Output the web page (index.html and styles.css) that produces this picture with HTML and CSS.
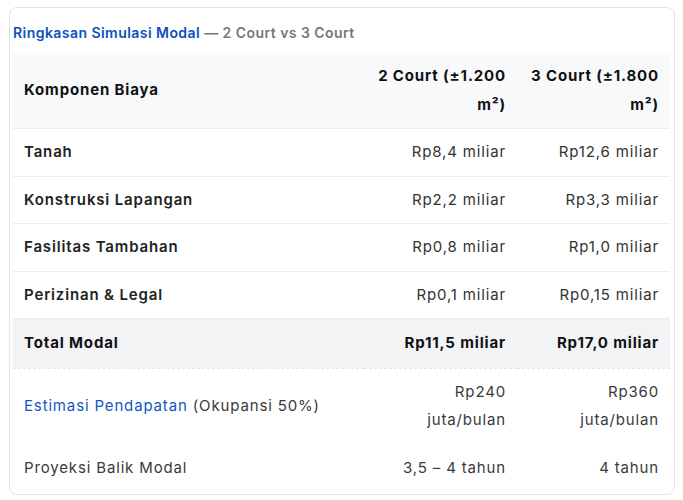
FILE: index.html
```html
<!DOCTYPE html>
<html lang="id">
<head>
<meta charset="utf-8">
<link rel="stylesheet" href="styles.css">
</head>
<body>
<div class="card">
  <table class="sim">
    <caption><span class="cap-main">Ringkasan Simulasi Modal</span> <span class="cap-sub">— 2 Court vs 3 Court</span></caption>
    <colgroup>
      <col class="c1"><col class="c2"><col class="c3">
    </colgroup>
    <thead>
      <tr>
        <th class="left">Komponen Biaya</th>
        <th>2 Court (±1.200 m²)</th>
        <th>3 Court (±1.800 m²)</th>
      </tr>
    </thead>
    <tbody>
      <tr><td class="label">Tanah</td><td>Rp8,4 miliar</td><td>Rp12,6 miliar</td></tr>
      <tr><td class="label">Konstruksi Lapangan</td><td>Rp2,2 miliar</td><td>Rp3,3 miliar</td></tr>
      <tr><td class="label">Fasilitas Tambahan</td><td>Rp0,8 miliar</td><td>Rp1,0 miliar</td></tr>
      <tr><td class="label">Perizinan &amp; Legal</td><td>Rp0,1 miliar</td><td>Rp0,15 miliar</td></tr>
      <tr class="total"><td class="label">Total Modal</td><td>Rp11,5 miliar</td><td>Rp17,0 miliar</td></tr>
      <tr class="plain"><td class="left"><span class="link">Estimasi Pendapatan</span> (Okupansi 50%)</td><td>Rp240 juta/bulan</td><td>Rp360 juta/bulan</td></tr>
      <tr class="plain"><td class="left">Proyeksi Balik Modal</td><td>3,5 – 4 tahun</td><td>4 tahun</td></tr>
    </tbody>
  </table>
</div>
</body>
</html>
```

FILE: styles.css
```css
* { box-sizing: border-box; }
html, body { margin: 0; padding: 0; background: #ffffff; }
body {
  font-family: Inter, "Open Sans", "Liberation Sans", sans-serif;
  color: #333333;
  padding: 7px 9px 0 9px;
}
.card {
  border: 1px solid #e3e4e6;
  border-radius: 8px;
  padding: 0 3px 2px 3px;
  width: 666px;
}
.sim {
  width: 657px;
  border-collapse: collapse;
  table-layout: fixed;
  font-size: 15px;
  line-height: 28.5px;
  letter-spacing: 0.85px;
}
.sim caption {
  text-align: left;
  font-size: 14px;
  line-height: 22px;
  font-weight: 600;
  letter-spacing: 0.45px;
  padding: 14px 0 9px 0;
}
.cap-main { color: #0d4fc0; }
.cap-sub { color: #777777; }
.c1 { width: 351px; }
.c2 { width: 153px; }
.c3 { width: 153px; }
.sim th, .sim td {
  padding: 9px 11px;
  text-align: right;
  vertical-align: middle;
  border-bottom: 1px solid #ebecee;
}
.sim thead th {
  background: #f8f9fb;
  color: #111111;
  font-weight: 700;
}
.sim .left { text-align: left; }
.sim td.label {
  text-align: left;
  font-weight: 600;
  color: #222222;
}
.sim tr.total td {
  background: #f2f3f5;
  font-weight: 700;
  color: #111111;
  padding-top: 10px;
  padding-bottom: 10px;
  border-bottom: 1px dashed #e4e5e8;
}
.sim tr.plain td {
  color: #3a3a3a;
  border-bottom: 1px solid transparent;
}
.link { color: #1356c4; }
```
